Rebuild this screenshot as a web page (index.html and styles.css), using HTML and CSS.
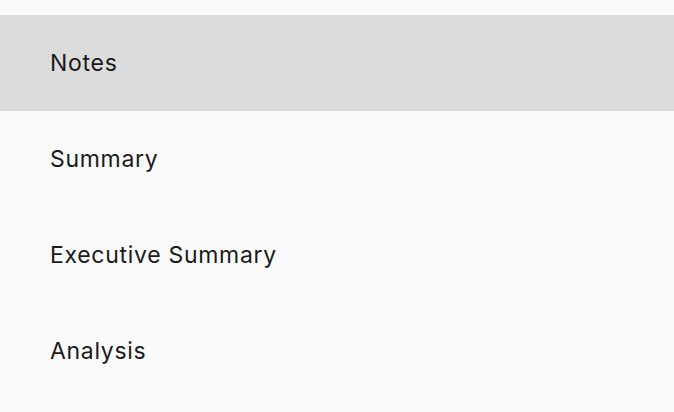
FILE: index.html
```html
<!DOCTYPE html>
<html>
<head>
<meta charset="UTF-8">
<link rel="stylesheet" href="styles.css">
<title>Menu</title>
</head>
<body>
<ul class="menu_list">
	<li class="menu_item active">Notes</li>
	<li class="menu_item">Summary</li>
	<li class="menu_item">Executive Summary</li>
	<li class="menu_item">Analysis</li>
</ul>
</body>
</html>
```
FILE: styles.css
```css
body {
	margin: 0;
	background: #fafafa;
	font-family: Inter, Lato, sans-serif;
	color: #1a1a1a;
}
.menu_list {
	list-style: none;
	margin: 0;
	padding: 15px 0 0 0;
}
.menu_item {
	height: 96px;
	display: flex;
	align-items: center;
	padding-left: 50px;
	font-size: 23px;
	letter-spacing: 0.7px;
}
.menu_item.active {
	background: #dcdcdc;
}
```
